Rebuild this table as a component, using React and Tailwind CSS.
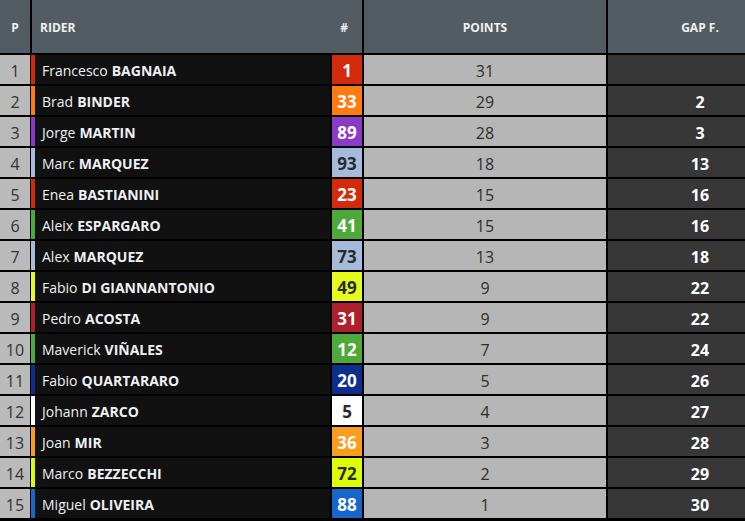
import React from 'react';

const riders = [
  { pos: 1, first: 'Francesco', last: 'BAGNAIA', num: 1, color: 'bg-[#d42a0c]', border: 'border-[#d42a0c]', dark: false, pts: 31, gap: '' },
  { pos: 2, first: 'Brad', last: 'BINDER', num: 33, color: 'bg-[#ff7a0f]', border: 'border-[#ff7a0f]', dark: false, pts: 29, gap: '2' },
  { pos: 3, first: 'Jorge', last: 'MARTIN', num: 89, color: 'bg-[#8a3ac6]', border: 'border-[#8a3ac6]', dark: false, pts: 28, gap: '3' },
  { pos: 4, first: 'Marc', last: 'MARQUEZ', num: 93, color: 'bg-[#a6bbdc]', border: 'border-[#a6bbdc]', dark: true, pts: 18, gap: '13' },
  { pos: 5, first: 'Enea', last: 'BASTIANINI', num: 23, color: 'bg-[#d42a0c]', border: 'border-[#d42a0c]', dark: false, pts: 15, gap: '16' },
  { pos: 6, first: 'Aleix', last: 'ESPARGARO', num: 41, color: 'bg-[#4ea83a]', border: 'border-[#4ea83a]', dark: false, pts: 15, gap: '16' },
  { pos: 7, first: 'Alex', last: 'MARQUEZ', num: 73, color: 'bg-[#a6bbdc]', border: 'border-[#a6bbdc]', dark: true, pts: 13, gap: '18' },
  { pos: 8, first: 'Fabio', last: 'DI GIANNANTONIO', num: 49, color: 'bg-[#e5fb1c]', border: 'border-[#e5fb1c]', dark: true, pts: 9, gap: '22' },
  { pos: 9, first: 'Pedro', last: 'ACOSTA', num: 31, color: 'bg-[#ad1f2a]', border: 'border-[#ad1f2a]', dark: false, pts: 9, gap: '22' },
  { pos: 10, first: 'Maverick', last: 'VIÑALES', num: 12, color: 'bg-[#4ea83a]', border: 'border-[#4ea83a]', dark: false, pts: 7, gap: '24' },
  { pos: 11, first: 'Fabio', last: 'QUARTARARO', num: 20, color: 'bg-[#0c2f8c]', border: 'border-[#0c2f8c]', dark: false, pts: 5, gap: '26' },
  { pos: 12, first: 'Johann', last: 'ZARCO', num: 5, color: 'bg-[#ffffff]', border: 'border-[#ffffff]', dark: true, pts: 4, gap: '27' },
  { pos: 13, first: 'Joan', last: 'MIR', num: 36, color: 'bg-[#f89d1e]', border: 'border-[#f89d1e]', dark: false, pts: 3, gap: '28' },
  { pos: 14, first: 'Marco', last: 'BEZZECCHI', num: 72, color: 'bg-[#dcfd06]', border: 'border-[#dcfd06]', dark: true, pts: 2, gap: '29' },
  { pos: 15, first: 'Miguel', last: 'OLIVEIRA', num: 88, color: 'bg-[#1666cb]', border: 'border-[#1666cb]', dark: false, pts: 1, gap: '30' },
];

export default function App() {
  return (
    <div className="w-[745px] h-[521px] overflow-hidden bg-black font-['Open_Sans',sans-serif]">
      <div className="w-[792px] flex flex-col gap-[2px]">
        {/* header */}
        <div className="grid grid-cols-[30px_330px_242px_184px] gap-[2px] h-[53px] text-[12px] font-bold text-[#eef0f2]">
          <div className="bg-[#535b63] flex items-center justify-center pt-[2px]">P</div>
          <div className="bg-[#535b63] flex items-center justify-between pl-[8px] pr-[14px] pt-[2px]">
            <span>RIDER</span>
            <span>#</span>
          </div>
          <div className="bg-[#535b63] flex items-center justify-center pt-[2px]">POINTS</div>
          <div className="bg-[#535b63] flex items-center justify-center pt-[2px]">GAP F.</div>
        </div>

        {riders.map((r) => (
          <div key={r.pos} className="grid grid-cols-[30px_298px_30px_242px_184px] gap-[2px] h-[29px]">
            <div className="bg-[#bababa] flex items-center justify-center pt-[2px] text-[16px] text-[#333]">{r.pos}</div>
            <div className={`bg-[#111111] border-l-4 ${r.border} flex items-center pt-[2px] pl-[7px] text-[14px] text-[#eef0f4] -ml-[1px]`}>
              <span>{r.first}</span>
              <span className="font-bold ml-[4px]">{r.last}</span>
            </div>
            <div className={`${r.color} flex items-center justify-center pt-[2px] text-[17px] font-bold ${r.dark ? 'text-[#2a2a2a]' : 'text-white'}`}>
              {r.num}
            </div>
            <div className="bg-[#b6b6b6] flex items-center justify-center pt-[2px] text-[16px] text-[#2e2e2e]">{r.pts}</div>
            <div className="bg-[#373737] flex items-center justify-center pt-[2px] text-[16px] font-bold text-white">{r.gap}</div>
          </div>
        ))}
      </div>
    </div>
  );
}
